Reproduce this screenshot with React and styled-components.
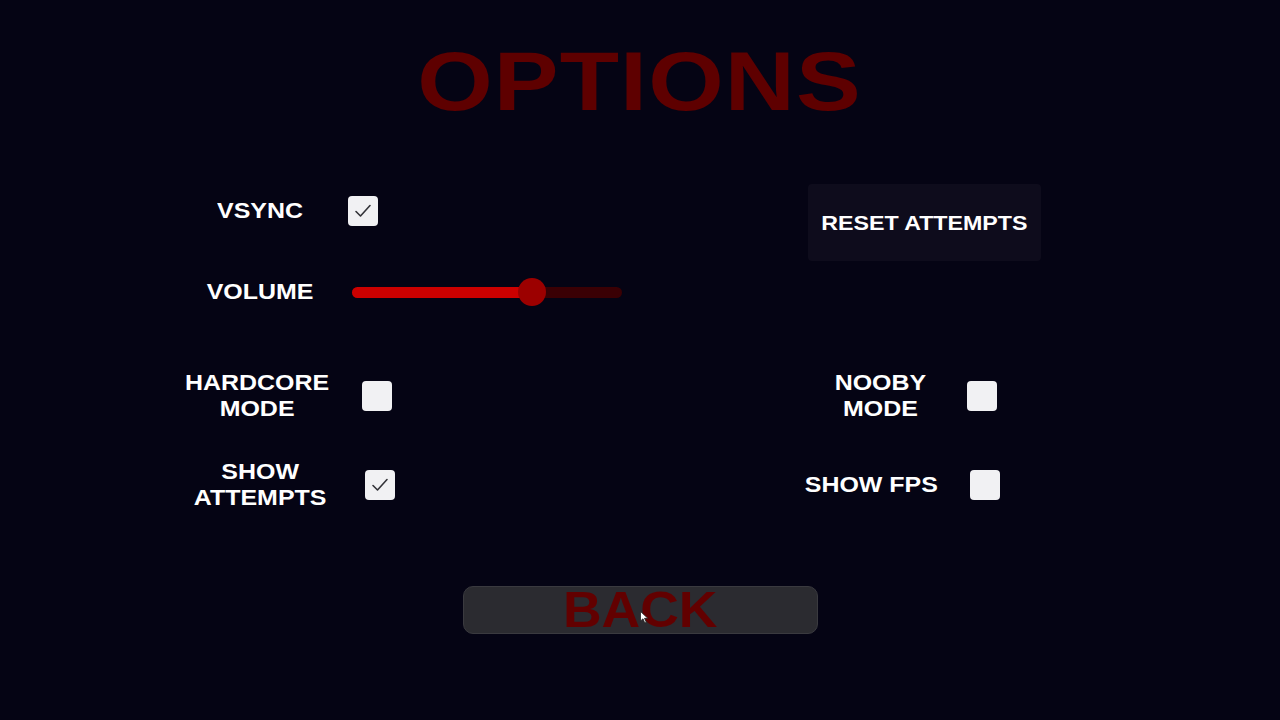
import React, { useState } from "react";
import styled, { createGlobalStyle } from "styled-components";

const Global = createGlobalStyle`
  html, body {
    margin: 0;
    padding: 0;
    background: #050414;
  }
  body {
    font-family: "Liberation Sans", Arial, sans-serif;
    color: #ffffff;
  }
`;

const Page = styled.div`
  position: relative;
  width: 1280px;
  height: 720px;
  display: flex;
  flex-direction: column;
  align-items: center;
  background: #050414;
  overflow: hidden;
`;

/* The menu font is drawn wide, so text is stretched sideways */
const Title = styled.h1`
  margin: 39px 0 0;
  font-size: 84px;
  line-height: 1;
  font-weight: 700;
  letter-spacing: 1px;
  color: #5e0000;
  transform: scaleX(1.155);
`;

const Settings = styled.div`
  align-self: stretch;
  margin: 53px 0 0 180px;
  display: grid;
  grid-template-columns: 160px 460px 160px auto;
  grid-template-rows: 70px 92px 116px 62px;
  align-items: center;
`;

const Label = styled.div`
  grid-column: ${(p) => (p.$side === "right" ? 3 : 1)};
  grid-row: ${(p) => p.$row};
  justify-self: center;
  transform: translateX(${(p) => p.$shift || 0}px) scaleX(1.16);
  text-align: center;
  white-space: nowrap;
  font-size: 21.5px;
  line-height: 26px;
  font-weight: 700;
  color: #ffffff;
`;

const Control = styled.div`
  grid-column: ${(p) => (p.$side === "right" ? 4 : 2)};
  grid-row: ${(p) => p.$row};
  display: flex;
  align-items: center;
  padding-left: ${(p) => p.$offset}px;
`;

const Box = styled.button`
  width: 30px;
  height: 30px;
  padding: 0;
  border: none;
  border-radius: 4px;
  background: #f1f1f3;
  display: flex;
  align-items: center;
  justify-content: center;
  cursor: pointer;
`;

const Track = styled.div`
  position: relative;
  width: 270px;
  height: 11px;
  border-radius: 6px;
  background: #3a0004;
  display: flex;
`;

const Fill = styled.div`
  height: 100%;
  border-radius: 6px 0 0 6px;
  background: #cc0000;
`;

const Knob = styled.div`
  position: absolute;
  top: 50%;
  width: 28px;
  height: 28px;
  margin-left: -14px;
  margin-top: -14px;
  border-radius: 50%;
  background: #9c0000;
`;

const ResetButton = styled.button`
  grid-column: 3 / span 2;
  grid-row: 1;
  align-self: start;
  margin: 8px 0 0 8px;
  width: 233px;
  height: 77px;
  border: none;
  border-radius: 4px;
  background: #0e0c1c;
  color: #ffffff;
  font-family: "Liberation Sans", Arial, sans-serif;
  font-size: 21px;
  font-weight: 700;
  cursor: pointer;
`;

const ResetText = styled.span`
  display: inline-block;
  white-space: nowrap;
  transform: scaleX(1.105);
`;

const BackButton = styled.button`
  margin-top: 70px;
  width: 355px;
  height: 48px;
  padding: 0;
  border: 1px solid #3a3a3f;
  border-radius: 10px;
  background: #2b2b30;
  color: #620000;
  font-family: "Liberation Sans", Arial, sans-serif;
  font-size: 50px;
  line-height: 46px;
  font-weight: 700;
  cursor: pointer;
  overflow: visible;
`;

const BackText = styled.span`
  display: inline-block;
  transform: scaleX(1.07);
`;

const Pointer = styled.svg`
  position: absolute;
  left: 640px;
  top: 611px;
  pointer-events: none;
`;

const Check = () => (
  <svg width="22" height="22" viewBox="0 0 22 22" fill="none">
    <path d="M4 11.5 L8.5 16 L18 5.5" stroke="#333338" strokeWidth="1.6" strokeLinecap="round" strokeLinejoin="round" />
  </svg>
);

const Toggle = ({ checked, onToggle }) => (
  <Box onClick={onToggle}>{checked ? <Check /> : null}</Box>
);

export default function App() {
  const [opts, setOpts] = useState({
    vsync: true,
    hardcore: false,
    attempts: true,
    nooby: false,
    fps: false,
  });
  const volume = 0.667;
  const flip = (k) => () => setOpts((o) => ({ ...o, [k]: !o[k] }));

  return (
    <Page>
      <Global />
      <Title>OPTIONS</Title>
      <Settings>
        <Label $row={1}>VSYNC</Label>
        <Control $row={1} $offset={8}>
          <Toggle checked={opts.vsync} onToggle={flip("vsync")} />
        </Control>
        <ResetButton>
          <ResetText>RESET ATTEMPTS</ResetText>
        </ResetButton>

        <Label $row={2}>VOLUME</Label>
        <Control $row={2} $offset={12}>
          <Track>
            <Fill style={{ width: `${volume * 100}%` }} />
            <Knob style={{ left: `${volume * 100}%` }} />
          </Track>
        </Control>

        <Label $row={3} $shift={-3}>
          HARDCORE
          <br />
          MODE
        </Label>
        <Control $row={3} $offset={22}>
          <Toggle checked={opts.hardcore} onToggle={flip("hardcore")} />
        </Control>
        <Label $row={3} $side="right">
          NOOBY
          <br />
          MODE
        </Label>
        <Control $row={3} $side="right" $offset={7}>
          <Toggle checked={opts.nooby} onToggle={flip("nooby")} />
        </Control>

        <Label $row={4}>
          SHOW
          <br />
          ATTEMPTS
        </Label>
        <Control $row={4} $offset={25}>
          <Toggle checked={opts.attempts} onToggle={flip("attempts")} />
        </Control>
        <Label $row={4} $side="right" $shift={-9}>
          SHOW FPS
        </Label>
        <Control $row={4} $side="right" $offset={10}>
          <Toggle checked={opts.fps} onToggle={flip("fps")} />
        </Control>
      </Settings>
      <BackButton>
        <BackText>BACK</BackText>
      </BackButton>
      <Pointer width="9" height="13" viewBox="0 0 9 13">
        <path d="M0.5 0.5 L0.5 10 L3 7.8 L4.8 12 L6.3 11.3 L4.5 7.3 L7.8 7.3 Z" fill="#ffffff" stroke="#222" strokeWidth="0.8" />
      </Pointer>
    </Page>
  );
}
